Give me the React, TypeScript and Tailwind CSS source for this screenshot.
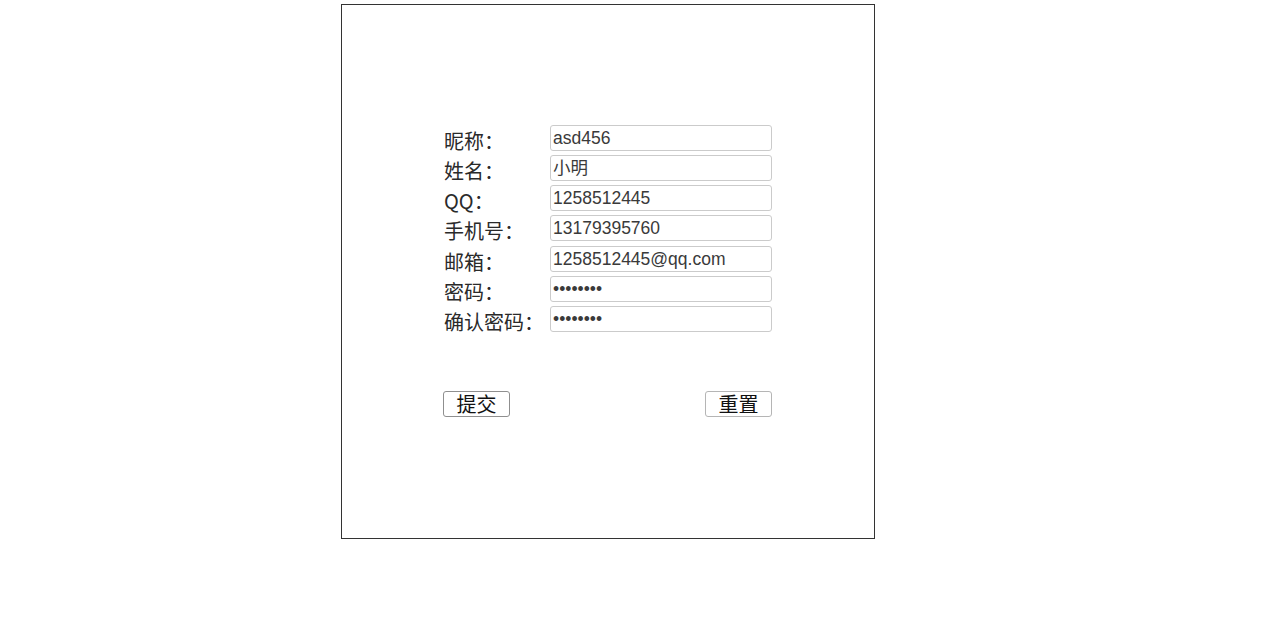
const fields = [
  { label: '昵称', type: 'text', value: 'asd456' },
  { label: '姓名', type: 'text', value: '小明' },
  { label: 'QQ', type: 'text', value: '1258512445' },
  { label: '手机号', type: 'text', value: '13179395760' },
  { label: '邮箱', type: 'text', value: '1258512445@qq.com' },
  { label: '密码', type: 'password', value: '12345678' },
  { label: '确认密码', type: 'password', value: '12345678' },
]

export default function App() {
  return (
    <div className="min-h-[643px] bg-white pt-[4px] pl-[341px] font-['Noto_Sans_CJK_SC',sans-serif]">
      <div className="w-[534px] h-[535px] border border-[#333] pt-[120px] pl-[101px]">
        <form className="w-[330px]" onSubmit={(e) => e.preventDefault()}>
          <div className="grid grid-cols-[107px_222px] gap-y-[4.17px]">
            {fields.map((f) => (
              <div key={f.label} className="contents">
                <label className="h-[26px] pl-px pt-[3px] text-[20px] leading-[26px] text-[#2a2a2a]">
                  {f.label}：
                </label>
                <input
                  type={f.type}
                  defaultValue={f.value}
                  className="h-[26px] w-[222px] rounded-[3px] border border-[#cbcbcb] px-[2px] text-[17.5px] text-[#3a3a3a] font-['Liberation_Sans','Noto_Sans_CJK_SC',sans-serif] outline-none"
                />
              </div>
            ))}
          </div>
          <div className="mt-[59px] flex w-[329px] justify-between">
            <button
              type="submit"
              className="h-[26px] w-[67px] rounded-[3px] border border-[#8f8f8f] bg-white text-[20px] leading-[22px] text-[#111]"
            >
              提交
            </button>
            <button
              type="reset"
              className="h-[26px] w-[67px] rounded-[3px] border border-[#b5b5b5] bg-white text-[20px] leading-[22px] text-[#111]"
            >
              重置
            </button>
          </div>
        </form>
      </div>
    </div>
  )
}
